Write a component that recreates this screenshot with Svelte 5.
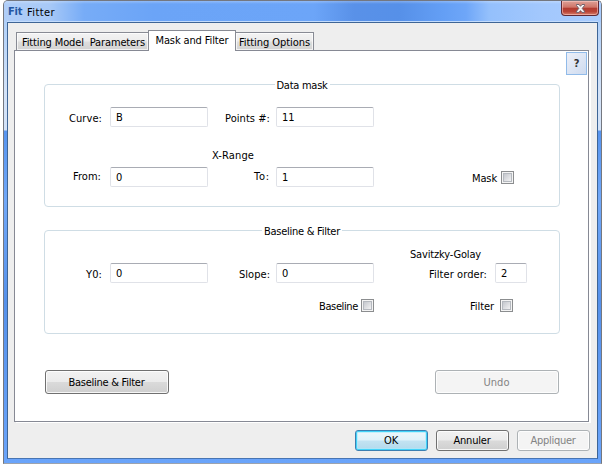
<script>
  const tabs = [
    { text: 'Fitting Model  Parameters', width: 123, cls: 'first' },
    { text: 'Mask and Filter', width: 73, cls: 'active' },
    { text: 'Fitting Options', width: 71, cls: 'last' }
  ];

  // Spreads the letters so that the text takes the given width.
  function fit(node, width) {
    const natural = node.getBoundingClientRect().width;
    const spacing = (width - natural) / Math.max(1, node.textContent.length);
    node.style.letterSpacing = spacing.toFixed(3) + 'px';
  }
</script>

{#snippet t(text, width)}<span class="t" use:fit={width}>{text}</span>{/snippet}

<div class="window">
  <header>
    <span class="logo">Fit</span>
    <span class="title">{@render t('Fitter', 28)}</span>
    <button class="close" aria-label="Close">
      <svg width="11" height="9" viewBox="0 0 11 9">
        <path d="M1.5 .5H4L5.5 2.3 7 .5H9.5V1.5L7.2 4.4 9.5 7.3V8.4H7L5.5 6.6 4 8.4H1.5V7.3L3.8 4.4 1.5 1.5Z" fill="#f6f3f3" stroke="#635a66" stroke-width=".9" />
      </svg>
    </button>
  </header>

  <main>
    <nav>
      {#each tabs as tab}
        <div class="tab {tab.cls}">{@render t(tab.text, tab.width)}</div>
      {/each}
    </nav>

    <section class="panel">
      <button class="help">?</button>

      <fieldset class="mask">
        <legend>{@render t('Data mask', 51)}</legend>
        <div class="row r1">
          <div class="l1 low">{@render t('Curve:', 33)}</div>
          <div class="field">B</div>
          <div class="l2 low">{@render t('Points #:', 45)}</div>
          <div class="field">11</div>
        </div>
        <div class="range">{@render t('X-Range', 42)}</div>
        <div class="row r2">
          <div class="l1 from">{@render t('From:', 28)}</div>
          <div class="field">0</div>
          <div class="l2">{@render t('To:', 16)}</div>
          <div class="field">1</div>
          <div class="check maskcheck">{@render t('Mask', 25)}<i></i></div>
        </div>
      </fieldset>

      <fieldset class="baseline">
        <legend>{@render t('Baseline & Filter', 76)}</legend>
        <div class="golay">{@render t('Savitzky-Golay', 71)}</div>
        <div class="row r3">
          <div class="l1 low">{@render t('Y0:', 16)}</div>
          <div class="field">0</div>
          <div class="l2 low">{@render t('Slope:', 31)}</div>
          <div class="field">0</div>
          <div class="l3 low">{@render t('Filter order:', 58)}</div>
          <div class="field small">2</div>
        </div>
        <div class="row checks">
          <div class="check basecheck">{@render t('Baseline', 39)}<i></i></div>
          <div class="check filtercheck">{@render t('Filter', 24)}<i></i></div>
        </div>
      </fieldset>

      <div class="actions">
        <button class="btn wide">{@render t('Baseline & Filter', 76)}</button>
        <button class="btn wide off">{@render t('Undo', 26)}</button>
      </div>
    </section>

    <footer>
      <button class="btn ok">{@render t('OK', 14)}</button>
      <button class="btn">{@render t('Annuler', 37)}</button>
      <button class="btn off">{@render t('Appliquer', 45)}</button>
    </footer>
  </main>
</div>

<style>
  :global(body) { margin: 0; background: #fff; overflow: hidden; }
  .window, .window * { box-sizing: border-box; }
  .window {
    width: 599px;
    height: 464px;
    margin-left: 3px;
    padding: 0 3px;
    display: flex;
    flex-direction: column;
    border: 1px solid #74777f;
    border-bottom-color: #9da3ad;
    border-radius: 5px 5px 0 0;
    background: linear-gradient(#a6cbfa 0, #d3e2f7 90px, #d3e2f7 129px, #5794ee 130px, #71a8f8 200px, #5691ea 300px, #6aa4fa);
    font: 11px/14px 'DejaVu Sans Condensed', 'DejaVu Sans', sans-serif;
    color: #000;
  }
  .t { display: inline-block; white-space: pre; }
  button { font: inherit; padding: 0; margin: 0; color: inherit; }
  header {
    height: 21px;
    margin: 0 -3px;
    padding-left: 4px;
    display: flex;
    flex: none;
    border-radius: 4px 4px 0 0;
    background:
      linear-gradient(rgba(255,255,255,.25) 0, transparent 3px),
      linear-gradient(90deg, #b0cef8 0, #a8c9f7 45px, #77acf7 80px, #6ba4f7 150px, #6ca5f8 310px, #5991e8 350px, #5690e8 395px, #649ff5 440px, #6ea6f8 462px, #94c0fc 485px, #a3c8fd 540px, #a9ccfe);
  }
  .logo {
    width: 17px;
    padding-top: 4px;
    font: bold 11px/14px 'DejaVu Sans Condensed', 'DejaVu Sans', sans-serif;
    letter-spacing: -.2px;
    color: #2457a2;
  }
  .title { padding: 5px 0 0 2px; }
  .close {
    width: 38px;
    height: 15px;
    margin-left: auto;
    margin-right: 2px;
    display: flex;
    justify-content: center;
    align-items: center;
    border: 1px solid #5f2a35;
    border-top: 0;
    border-radius: 0 0 4px 4px;
    box-shadow: inset 0 0 0 1px rgba(255,205,200,.55);
    background: linear-gradient(#dda096 0, #cf7468 45%, #b23b30 50%, #b94437 75%, #d67d6b);
  }
  main {
    flex: 1;
    width: 591px;
    margin-bottom: 4px;
    padding: 7px 5px 0 6px;
    display: flex;
    flex-direction: column;
    border: 1px solid #3e6596;
    border-bottom-color: #4875b3;
    box-shadow: 0 -1px #c3dcfc;
    background: #eee;
  }
  nav { display: flex; height: 20px; padding-left: 2px; align-items: flex-end; flex: none; }
  .tab {
    height: 18px;
    padding-top: 3px;
    text-align: center;
    white-space: nowrap;
    border: 1px solid #888b94;
    border-bottom: 0;
    background: linear-gradient(#f3f3f3 0, #ececec 48%, #dedede 52%, #d2d2d2);
    box-shadow: inset 0 0 0 1px rgba(255,255,255,.7);
  }
  .first { width: 132px; border-right: 0; padding-left: 2px; }
  .last { width: 78px; border-left: 0; }
  .active {
    width: 88px;
    height: 21px;
    margin-bottom: -1px;
    padding-top: 3px;
    background: #fff;
    box-shadow: none;
    z-index: 1;
  }
  .panel {
    width: 575px;
    height: 372px;
    flex: none;
    display: flex;
    flex-direction: column;
    position: relative;
    padding: 26px 0 0 29px;
    border: 1px solid #868994;
    box-shadow: 2px 1px #fff;
    background: #fff;
  }
  .help {
    position: absolute;
    top: 1px;
    right: 1px;
    width: 21px;
    height: 23px;
    border: 1px solid #91bbe9;
    background: linear-gradient(135deg, #edf0f9, #cedbef);
    color: #333;
    font-weight: bold;
  }
  fieldset {
    width: 516px;
    min-width: 0;
    margin: 0;
    padding: 0;
    border: 1px solid #cfdde5;
    border-radius: 4px;
  }
  legend { height: 15px; padding: 1px 2px 0; margin: 0 auto; line-height: 16px; }
  .mask { height: 130px; }
  .baseline { height: 111px; margin-top: 16px; }
  .row { display: flex; }
  .r1 { padding-top: 15px; }
  .range { height: 40px; padding: 22px 0 0 167px; line-height: 14px; }
  .field {
    width: 98px;
    height: 20px;
    padding: 3px 0 0 5px;
    border: 1px solid #e0e2e8;
    border-top-color: #a9acb4;
    border-radius: 2px;
    background: #fff;
    line-height: 13px;
  }
  .small { width: 32px; }
  .l1, .l2, .l3 { height: 20px; text-align: right; padding-top: 3px; }
  .low { padding-top: 5px; }
  .l1 { width: 57px; margin-right: 8px; }
  .from { padding-right: 1px; }
  .l2 { width: 62px; margin-right: 6px; }
  .l3 { width: 113px; margin-right: 8px; }
  .golay { height: 25px; padding: 10px 0 0 365px; }
  .check { display: flex; height: 14px; }
  .check .t, .check :global(.t) { padding-top: 1px; }
  .check i {
    width: 13px;
    height: 13px;
    border: 1px solid #8b8d8f;
    background: linear-gradient(135deg, #c4c7cd, #f2f2f3) content-box, #f4f4f4;
    padding: 2px;
    box-shadow: inset 0 0 0 1px #f4f4f4, inset 0 0 0 2px #b5b9bf;
  }
  .check i { margin-left: 4px; }
  .maskcheck { padding-top: 0; margin: 4px 0 0 98px; }
  .checks { padding-top: 16px; }
  .basecheck { margin-left: 274px; }
  .basecheck i { margin-left: 3px; }
  .filtercheck { margin-left: 96px; }
  .filtercheck i { margin-left: 6px; }
  .actions { display: flex; justify-content: space-between; width: 514px; margin: 36px 0 0 1px; }
  .btn {
    width: 73px;
    height: 21px;
    padding: 1px 1px 0 0;
    border: 1px solid #707070;
    border-radius: 3px;
    box-shadow: inset 0 0 0 1px rgba(255,255,255,.8);
    background: linear-gradient(#f2f2f2 0, #ebebeb 48%, #dadada 52%, #cfcfcf);
    line-height: 14px;
  }
  .wide { width: 124px; height: 24px; }
  .off { border-color: #adb2b5; background: #f4f4f4; color: #838383; }
  .ok {
    border-color: #3c7fb1;
    box-shadow: inset 0 0 0 1px #42d2f8, inset 0 0 0 2px rgba(170,235,252,.6);
    background: linear-gradient(#eef7fb 0, #e0f2fa 48%, #c2e3f2 52%, #b2d9ec);
  }
  footer { display: flex; justify-content: flex-end; gap: 8px; padding: 8px 0 0; width: 576px; }
</style>
